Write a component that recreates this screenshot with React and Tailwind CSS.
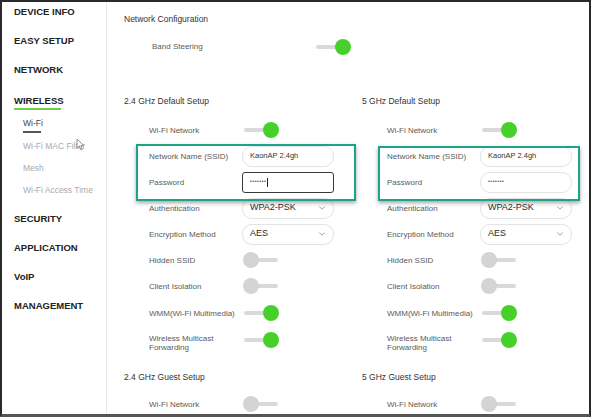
import { ChevronDown } from "lucide-react";

const font = { fontFamily: '"Liberation Sans", Arial, sans-serif' };

function Toggle({ on }) {
  return (
    <div className="relative w-[38px] h-[16px] flex items-center">
      <div className="h-[4px] w-[34px] ml-[2px] rounded-full bg-[#d9d9d9]" />
      <div
        className={`absolute top-0 w-[16px] h-[16px] rounded-full ${
          on ? "left-[21px] bg-[#46d12a]" : "left-[1px] bg-[#d4d4d4]"
        }`}
      />
    </div>
  );
}

function Row({ label, children }) {
  return (
    <div className="flex h-[26px] items-center">
      <div className="w-[93px] pl-[25px] box-content text-[8px] leading-[9px] text-[#5a5a5a]">{label}</div>
      <div>{children}</div>
    </div>
  );
}

function TextBox({ value, active }) {
  return (
    <div
      className={`w-[92px] h-[21px] flex items-center px-[7px] text-[7.5px] text-[#333] ${
        active
          ? "border-[1.5px] border-[#3a3a3a] rounded-[3px]"
          : "border border-[#e3e3e3] rounded-[10px]"
      }`}
    >
      {value}
    </div>
  );
}

function Select({ value }) {
  return (
    <div className="w-[92px] h-[21px] flex items-center justify-between pl-[7px] pr-[6px] border border-[#e3e3e3] rounded-[10px] text-[9px] text-[#2a2a2a]">
      <span>{value}</span>
      <ChevronDown size={10} strokeWidth={1.5} className="text-[#666]" />
    </div>
  );
}

function WifiColumn({ title, guest, cursor, boxClass }) {
  return (
    <div className="relative">
      <div className="h-[16px] flex items-center text-[8.5px] text-[#333]">{title}</div>
      <div className="h-[8px]" />
      <Row label="Wi-Fi Network">
        <Toggle on />
      </Row>
      <Row label="Network Name (SSID)">
        <TextBox value="KaonAP 2.4gh" />
      </Row>
      <Row label="Password">
        <TextBox
          active={cursor}
          value={
            <span className="flex items-center">
              <span className="text-[5px] tracking-[0.6px] text-[#444]">•••••••</span>
              {cursor && <span className="w-[1px] h-[9px] bg-[#222] ml-[1px]" />}
            </span>
          }
        />
      </Row>
      <Row label="Authentication">
        <Select value="WPA2-PSK" />
      </Row>
      <Row label="Encryption Method">
        <Select value="AES" />
      </Row>
      <Row label="Hidden SSID">
        <Toggle />
      </Row>
      <Row label="Client Isolation">
        <Toggle />
      </Row>
      <div className="h-[1px]" />
      <Row label="WMM(Wi-Fi Multimedia)">
        <Toggle on />
      </Row>
      <div className="flex items-start h-[28px]">
        <div className="w-[93px] pl-[25px] box-content pt-[8px] text-[8px] leading-[9px] text-[#5a5a5a]">
          Wireless Multicast
          <br />
          Forwarding
        </div>
        <div className="pt-[6px]">
          <Toggle on />
        </div>
      </div>
      <div className="h-[15px]" />
      <div className="h-[16px] flex items-center text-[8.5px] text-[#333]">{guest}</div>
      <div className="h-[6px]" />
      <Row label="Wi-Fi Network">
        <Toggle />
      </Row>
      {/* highlight annotation */}
      <div className={`absolute border-2 border-[#1ba486] shadow-[0_2px_4px_rgba(0,0,0,0.35)] ${boxClass}`} />
    </div>
  );
}

const topMenu = ["DEVICE INFO", "EASY SETUP", "NETWORK"];
const bottomMenu = ["SECURITY", "APPLICATION", "VoIP", "MANAGEMENT"];
const subMenu = ["Wi-Fi MAC Filter", "Mesh", "Wi-Fi Access Time"];

export default function App() {
  return (
    <div style={font} className="w-[591px] h-[417px] bg-white border-2 border-[#2a2a2a] border-b-[3px] border-b-[#555] overflow-hidden flex">
      {/* sidebar */}
      <div className="relative w-[105px] shrink-0 border-r border-[#e6e6e6] pl-[12px]">
        <div className="-mt-[4px]">
          {topMenu.map((m) => (
            <div key={m} className="h-[29px] flex items-center text-[9.5px] font-bold text-[#222]">
              {m}
            </div>
          ))}
        </div>
        <div className="pt-[10px]">
          <span className="block text-[9.5px] font-bold text-[#222] leading-[11px]">WIRELESS</span>
          <span className="block w-[47px] h-[2px] bg-[#6fce4a] mt-[2px]" />
        </div>
        <div className="pl-[9px]">
          <span className="block mt-[8px] text-[8.5px] text-[#444] leading-[10px]">Wi-Fi</span>
          <span className="block w-[18px] h-[2px] bg-[#555] mt-[3px]" />
          <div className="mt-[2px]">
            {subMenu.map((s) => (
              <div key={s} className="h-[22px] flex items-center text-[8.5px] text-[#aaa]">
                {s}
              </div>
            ))}
          </div>
        </div>
        <div className="h-[4px]" />
        {bottomMenu.map((m) => (
          <div key={m} className="h-[29px] flex items-center text-[9.5px] font-bold text-[#222]">
            {m}
          </div>
        ))}
        <svg className="absolute left-[74px] top-[136px]" width="9" height="13" viewBox="0 0 9 13">
          <path d="M1 1 L1 10 L3.3 8 L5 12 L6.4 11.3 L4.8 7.6 L7.8 7.6 Z" fill="#fff" stroke="#777" strokeWidth="0.8" />
        </svg>
      </div>

      {/* main */}
      <div className="flex-1 pl-[17px] pt-[9px]">
        <div className="h-[16px] flex items-center text-[8.5px] text-[#333]">Network Configuration</div>
        <div className="h-[7px]" />
        <div className="h-[26px] flex items-center">
          <div className="w-[162px] pl-[28px] box-content text-[8px] text-[#5a5a5a]">Band Steering</div>
          <Toggle on />
        </div>
        <div className="h-[33px]" />
        <div className="grid grid-cols-[238px_1fr]">
          <WifiColumn
            title="2.4 GHz Default Setup"
            guest="2.4 GHz Guest Setup"
            cursor
            boxClass="left-[12px] top-[51px] w-[220px] h-[57px]"
          />
          <WifiColumn
            title="5 GHz Default Setup"
            guest="5 GHz Guest Setup"
            boxClass="left-[16px] top-[53px] w-[202px] h-[55px]"
          />
        </div>
      </div>
    </div>
  );
}
